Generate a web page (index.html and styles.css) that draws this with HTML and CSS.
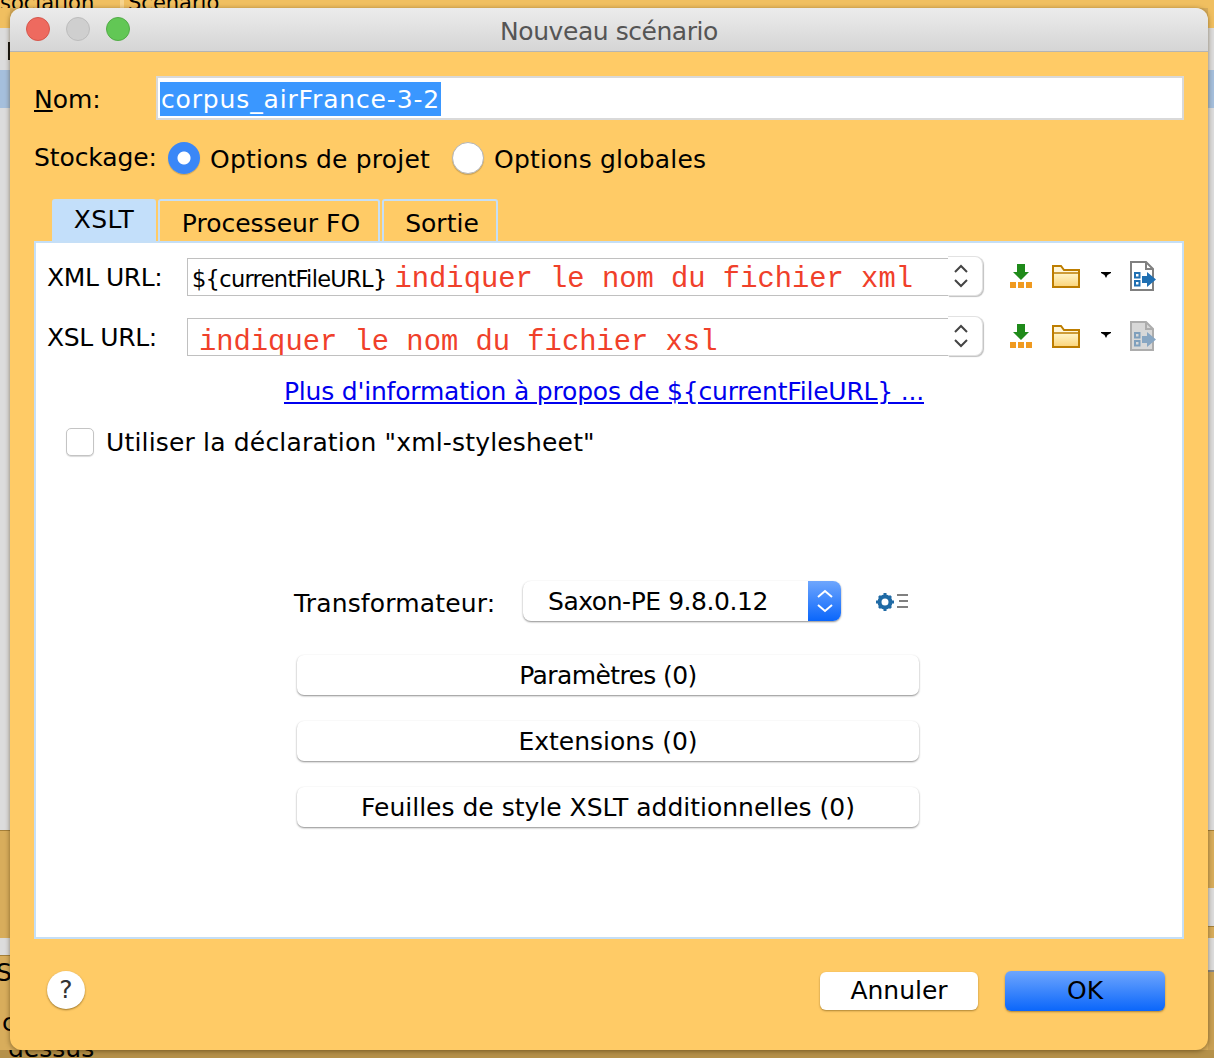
FILE: index.html
```html
<!DOCTYPE html>
<html lang="fr">
<head>
<meta charset="UTF-8">
<title>Nouveau scénario</title>
<link rel="stylesheet" href="styles.css">
</head>
<body>

<!-- l'application derrière la fenêtre -->
<div class="desk">
  <div class="desk-top"><span class="desk-tab1">sociation</span><span class="desk-tab2">Scénario</span></div>
  <div class="desk-left">
    <div class="s-orange s20"></div>
    <div class="s-gray s42 with-mark"><span class="mark"></span></div>
    <div class="s-blue s38"></div>
    <div class="s-gray s722"></div>
    <div class="s-tan s108"></div>
    <div class="s-gray s17"></div>
    <div class="s-tan grow"><span class="desk-txt1">Sc</span><span class="desk-txt2">c</span></div>
  </div>
  <div class="desk-right">
    <div class="s-orange s20"></div>
    <div class="s-gray s42"></div>
    <div class="s-blue s38"></div>
    <div class="s-gray s722"></div>
    <div class="s-tan s58"></div>
    <div class="s-gray s38"></div>
    <div class="s-tan s12"></div>
    <div class="s-gray s32"></div>
    <div class="s-dark grow"></div>
  </div>
  <div class="desk-bottom"><span class="desk-txt3">dessus</span></div>
</div>

<div class="window">
  <div class="titlebar">
    <span class="light red"></span>
    <span class="light grey"></span>
    <span class="light green"></span>
    <span class="title">Nouveau scénario</span>
  </div>

  <div class="content">
    <div class="row-name">
      <label class="lbl-name"><u>N</u>om:</label>
      <div class="name-field"><span class="selected">corpus_airFrance-3-2</span></div>
    </div>

    <div class="row-store">
      <span class="lbl-store">Stockage:</span>
      <span class="radio on"></span><span class="radio-txt">Options de projet</span>
      <span class="radio"></span><span class="radio-txt">Options globales</span>
    </div>

    <div class="tabs">
      <div class="tab tab-on">XSLT</div>
      <div class="tab tab-fo">Processeur FO</div>
      <div class="tab tab-out">Sortie</div>
    </div>

    <div class="panel">
      <div class="url-row">
        <span class="url-lbl">XML URL:</span>
        <div class="combo">
          <div class="combo-field"><span class="var">${currentFileURL}</span><span class="hint">indiquer le nom du fichier xml</span></div>
          <div class="spin">
            <svg width="16" height="24" viewBox="0 0 16 24"><path d="M2 8l6-6 6 6M2 16l6 6 6-6" fill="none" stroke="#444" stroke-width="2"/></svg>
          </div>
        </div>
        <svg class="ic-down" width="22" height="24" viewBox="0 0 22 24"><path d="M7 0h8v8h4l-8 8-8-8h4z" fill="#1f8a1a"/><path d="M0 18h6v6H0zM8 18h6v6H8zM16 18h6v6h-6z" fill="#f09a20"/></svg>
        <svg class="ic-folder" width="28" height="24" viewBox="0 0 28 24"><defs><linearGradient id="fg" x1="0" y1="0" x2="0" y2="1"><stop offset="0" stop-color="#fff3c4"/><stop offset="1" stop-color="#fbd67e"/></linearGradient></defs><path d="M1 23V2h8l3 4h15v17z" fill="#fff6d8" stroke="#bd7d00" stroke-width="2"/><path d="M2 10h24v12H2z" fill="url(#fg)"/><path d="M1 9h26" stroke="#bd7d00" stroke-width="1.5"/></svg>
        <svg class="ic-caret" width="10" height="6" viewBox="0 0 10 6"><path d="M0 0h10v1L6.500 3 5 6 3.500 3 0 1z" fill="#000"/></svg>
        <svg class="ic-doc" width="26" height="30" viewBox="0 0 26 30"><path d="M1 1h15l7 7v21H1z" fill="#fff" stroke="#808080" stroke-width="2"/><path d="M16 1v7h7" fill="none" stroke="#808080" stroke-width="2"/><path d="M5 12h4.500v4.500H5zM5 20h4.500v4.500H5z" fill="none" stroke="#1f6fb2" stroke-width="2"/><path d="M12 15h5v-4l9 7.500-9 7.500v-4h-5z" fill="#1f6fb2"/></svg>
      </div>

      <div class="url-row url-row2">
        <span class="url-lbl">XSL URL:</span>
        <div class="combo">
          <div class="combo-field combo-field2"><span class="hint hint2">indiquer le nom du fichier xsl</span></div>
          <div class="spin">
            <svg width="16" height="24" viewBox="0 0 16 24"><path d="M2 8l6-6 6 6M2 16l6 6 6-6" fill="none" stroke="#444" stroke-width="2"/></svg>
          </div>
        </div>
        <svg class="ic-down" width="22" height="24" viewBox="0 0 22 24"><path d="M7 0h8v8h4l-8 8-8-8h4z" fill="#1f8a1a"/><path d="M0 18h6v6H0zM8 18h6v6H8zM16 18h6v6h-6z" fill="#f09a20"/></svg>
        <svg class="ic-folder" width="28" height="24" viewBox="0 0 28 24"><path d="M1 23V2h8l3 4h15v17z" fill="#fff6d8" stroke="#bd7d00" stroke-width="2"/><path d="M2 10h24v12H2z" fill="url(#fg)"/><path d="M1 9h26" stroke="#bd7d00" stroke-width="1.5"/></svg>
        <svg class="ic-caret" width="10" height="6" viewBox="0 0 10 6"><path d="M0 0h10v1L6.500 3 5 6 3.500 3 0 1z" fill="#000"/></svg>
        <svg class="ic-doc" width="26" height="30" viewBox="0 0 26 30"><path d="M1 1h15l7 7v21H1z" fill="#d8d8d8" stroke="#adadad" stroke-width="2"/><path d="M16 1v7h7" fill="none" stroke="#adadad" stroke-width="2"/><path d="M5 12h4.500v4.500H5zM5 20h4.500v4.500H5z" fill="none" stroke="#7f9fbc" stroke-width="2"/><path d="M12 15h5v-4l9 7.500-9 7.500v-4h-5z" fill="#88a6c2"/></svg>
      </div>

      <div class="more"><a href="#">Plus d'information à propos de ${currentFileURL} ...</a></div>

      <div class="check-row">
        <span class="check"></span>
        <span class="check-txt">Utiliser la déclaration "xml-stylesheet"</span>
      </div>

      <div class="proc-row">
        <span class="proc-lbl">Transformateur:</span>
        <div class="select">
          <span class="select-txt">Saxon-PE 9.8.0.12</span>
          <div class="select-btn">
            <svg width="16" height="24" viewBox="0 0 16 24"><path d="M1 8l7-6 7 6M1 16l7 6 7-6" fill="none" stroke="#fff" stroke-width="2"/></svg>
          </div>
        </div>
        <svg class="ic-gear" width="33" height="18" viewBox="0 0 33 18"><circle cx="9" cy="9" r="5.500" fill="none" stroke="#1f6aa5" stroke-width="4"/><path d="M7.500 0h3v3h-3zM7.500 15h3v3h-3zM0 7.500h3v3H0zM15 7.500h3v3h-3zM2 4l2-2 2.500 2.500-2 2zM14 2l2 2-2.500 2.500-2-2zM2 14l2 2 2.500-2.500-2-2zM16 14l-2 2-2.500-2.500 2-2z" fill="#1f6aa5"/><path d="M21 2h11M23 8h9M21 14h11" stroke="#808080" stroke-width="2"/></svg>
      </div>

      <div class="wide-btns">
        <div class="wide-btn btn-param">Paramètres (0)</div>
        <div class="wide-btn">Extensions (0)</div>
        <div class="wide-btn">Feuilles de style XSLT additionnelles (0)</div>
      </div>
    </div>

    <div class="footer">
      <div class="help">?</div>
      <div class="btn btn-cancel">Annuler</div>
      <div class="btn btn-ok">OK</div>
    </div>
  </div>
</div>

</body>
</html>
```

FILE: styles.css
```css
html, body {margin: 0; padding: 0; height: 100%; overflow: hidden;}
body {font-family: "DejaVu Sans", sans-serif; font-size: 25px; color: #000; background: #d8ad5c;}

/* fond */
.desk {position: relative; display: grid; grid-template-columns: 10px 1fr 6px; grid-template-rows: 8px 1042px 8px; width: 1214px; height: 1058px; overflow: hidden;}
.desk-top {grid-column: 1 / 4; background: #f0bf60; overflow: hidden; position: relative; font-size: 21px;}
.desk-tab1 {position: absolute; left: 0; top: -9px; line-height: 24px;}
.desk-tab2 {position: absolute; left: 120px; top: -9px; line-height: 24px; padding-left: 4px; border-left: 4px solid #f7d48e;}
.desk-left, .desk-right {display: flex; flex-direction: column; overflow: hidden;}
.desk-left {grid-column: 1; grid-row: 2;}
.desk-right {grid-column: 3; grid-row: 2;}
.desk-bottom {grid-column: 1 / 4; background: #b5914a; overflow: hidden; position: relative;}
.desk-txt1 {position: absolute; left: -4px; top: 958px; line-height: 30px;}
.desk-txt2 {position: absolute; left: 2px; top: 1008px; line-height: 30px;}
.desk-txt3 {position: absolute; left: 8px; top: -16px; line-height: 30px;}
.s-orange {background: #f0bf60;}
.s-gray {background: #dcdcdc;}
.s-blue {background: #a5bfdc;}
.s-tan {background: #d8ad5c; border-top: 1px solid #a5803a; box-sizing: border-box;}
.s-dark {background: #c9a054; border-top: 2px solid #888;}
.s20 {height: 20px;} .s42 {height: 42px;} .s38 {height: 38px;} .s722 {height: 722px;}
.s108 {height: 108px;} .s17 {height: 17px;} .s58 {height: 58px;} .s12 {height: 12px;} .s32 {height: 32px;}
.grow {flex: 1;}
.with-mark {display: flex; justify-content: flex-end;}
.mark {width: 2px; height: 18px; margin-top: 14px; background: #111;}

/* fenêtre */
.window {position: absolute; left: 10px; top: 8px; width: 1198px; height: 1042px; border-radius: 12px; background: #ffcb66; overflow: hidden; box-shadow: 0 1px 5px rgba(60,40,0,.55);}
.titlebar {position: relative; display: flex; align-items: center; height: 43px; padding-left: 16px; gap: 16px; background: linear-gradient(#ececec, #d5d5d5); border-bottom: 1px solid #b4b4b4;}
.light {width: 24px; height: 24px; border-radius: 50%; box-sizing: border-box; margin-top: -1px;}
.light.red {background: #ee6a5f; border: 1px solid #d5574c;}
.light.grey {background: #cfcfcf; border: 1px solid #bcbcbc;}
.light.green {background: #62c755; border: 1px solid #52ab47;}
.title {position: absolute; left: 0; right: 0; padding-top: 4px; text-align: center; color: #555; font-size: 25px; letter-spacing: -.45px;}

.content {padding: 0 24px;}
.row-name {display: flex; align-items: center; height: 44px; margin-top: 24px;}
.lbl-name {width: 122px; padding-top: 4px; line-height: 44px;}
.name-field {box-sizing: border-box; flex: 1; height: 44px; padding: 4px 2px; background: #fff; border: 2px solid #d9d9d9; margin-right: 0;}
.selected {display: block; width: fit-content; background: #3a97ff; color: #fff; height: 34px; line-height: 35px; letter-spacing: .85px; padding: 0 1px;}

.row-store {display: flex; align-items: center; height: 34px; margin-top: 21px;}
.lbl-store {width: 134px; line-height: 34px; letter-spacing: -.1px;}
.radio {box-sizing: border-box; width: 32px; height: 32px; border-radius: 50%; background: #fff; border: 1px solid #b5b5b5; box-shadow: 0 1px 1px rgba(0,0,0,.2);}
.radio.on {background: radial-gradient(circle, #fff 0 6px, #3a87f7 7px); border: 0;}
.radio-txt {margin-left: 10px; margin-right: 22px; padding-top: 4px; line-height: 34px; letter-spacing: .2px;}

.tabs {display: flex; gap: 2px; margin: 24px 0 0 18px; height: 42px;}
.tab {box-sizing: border-box; text-align: center; border: 2px solid #c5dff7; border-bottom: 0; border-radius: 3px 3px 0 0; line-height: 46px;}
.tab-on {width: 104px; background: #c3dffa; line-height: 37px; letter-spacing: .4px;}
.tab-fo {width: 222px; padding-left: 4px;}
.tab-out {width: 116px; padding-left: 4px;}

.panel {box-sizing: border-box; height: 698px; background: #fff; border: 2px solid #c5dff7; border-bottom-width: 2px;}

.url-row {display: flex; align-items: center; height: 40px; margin-top: 13px; padding-left: 11px;}
.url-row2 {margin-top: 20px;}
.url-lbl {width: 140px; line-height: 38px; padding-top: 4px; letter-spacing: -.4px;}
.combo {display: flex; width: 796px; height: 40px;}
.combo-field {box-sizing: border-box; width: 761px; height: 38px; margin-top: 2px; border: 1px solid #c0c0c0; border-right: 0; background: #fff; padding-left: 4px; white-space: nowrap; overflow: hidden; line-height: 40px;}
.combo-field2 {line-height: 46px;}
.var {font-size: 22.500px; letter-spacing: -.7px;}
.hint {font-family: "Liberation Mono", monospace; font-size: 28.800px; color: #f0402a; margin-left: 8px;}
.hint2 {margin-left: 7px;}
.spin {box-sizing: border-box; flex: 1; display: flex; align-items: center; justify-content: center; padding-right: 8px; background: #fff; border: 1px solid #e2e2e2; border-left: 0; border-radius: 0 8px 8px 0; box-shadow: 1px 1px 1px rgba(0,0,0,.25);}
.ic-down {margin-left: 27px;}
.ic-folder {margin-left: 20px;}
.ic-caret {margin-left: 21px; margin-top: -2px;}
.ic-doc {margin-left: 19px;}

.more {text-align: center; margin-top: 16px; line-height: 40px; letter-spacing: -.2px; padding-right: 10px;}
.more a {color: #0000ee;}
.check-row {display: flex; align-items: center; height: 38px; margin: 11px 0 0 30px;}
.check {box-sizing: border-box; width: 28px; height: 28px; margin-right: 12px; background: #fff; border: 1px solid #c4c4c4; border-radius: 5px; box-shadow: 0 1px 1px rgba(0,0,0,.15);}
.check-txt {letter-spacing: .17px;}

.proc-row {display: flex; align-items: center; height: 40px; margin: 120px 0 0 258px;}
.proc-lbl {width: 229px; padding-top: 6px; line-height: 40px; letter-spacing: .15px;}
.select {display: flex; width: 318px; height: 40px; background: #fff; border-radius: 8px; overflow: hidden; box-shadow: 0 1px 2px rgba(0,0,0,.45);}
.select-txt {flex: 1; padding-left: 25px; line-height: 42px; letter-spacing: -.45px;}
.select-btn {width: 33px; display: flex; align-items: center; justify-content: center; background: linear-gradient(#6ea6fd, #0a66fb);}
.ic-gear {margin: 2px 0 0 35px;}

.wide-btns {display: flex; flex-direction: column; gap: 26px; margin: 34px 0 0 261px; width: 622px;}
.wide-btn {height: 40px; text-align: center; line-height: 42px; background: #fff; border-radius: 7px; box-shadow: 0 1px 2px rgba(0,0,0,.45);}
.btn-param {letter-spacing: -.6px;}

.footer {display: flex; align-items: center; height: 40px; margin-top: 32px; padding-left: 13px;}
.help {box-sizing: border-box; width: 38px; height: 38px; margin-top: -2px; border-radius: 50%; background: #fff; text-align: center; line-height: 38px; color: #333; box-shadow: 0 1px 2px rgba(90,60,0,.6);}
.btn {height: 38px; text-align: center; line-height: 38px; border-radius: 6px; box-shadow: 0 1px 2px rgba(90,60,0,.5);}
.btn-cancel {width: 158px; margin-left: 735px; background: #fff;}
.btn-ok {width: 160px; height: 40px; line-height: 39px; margin-left: 27px; background: linear-gradient(#6ea6fd, #0a66fb);}
```
